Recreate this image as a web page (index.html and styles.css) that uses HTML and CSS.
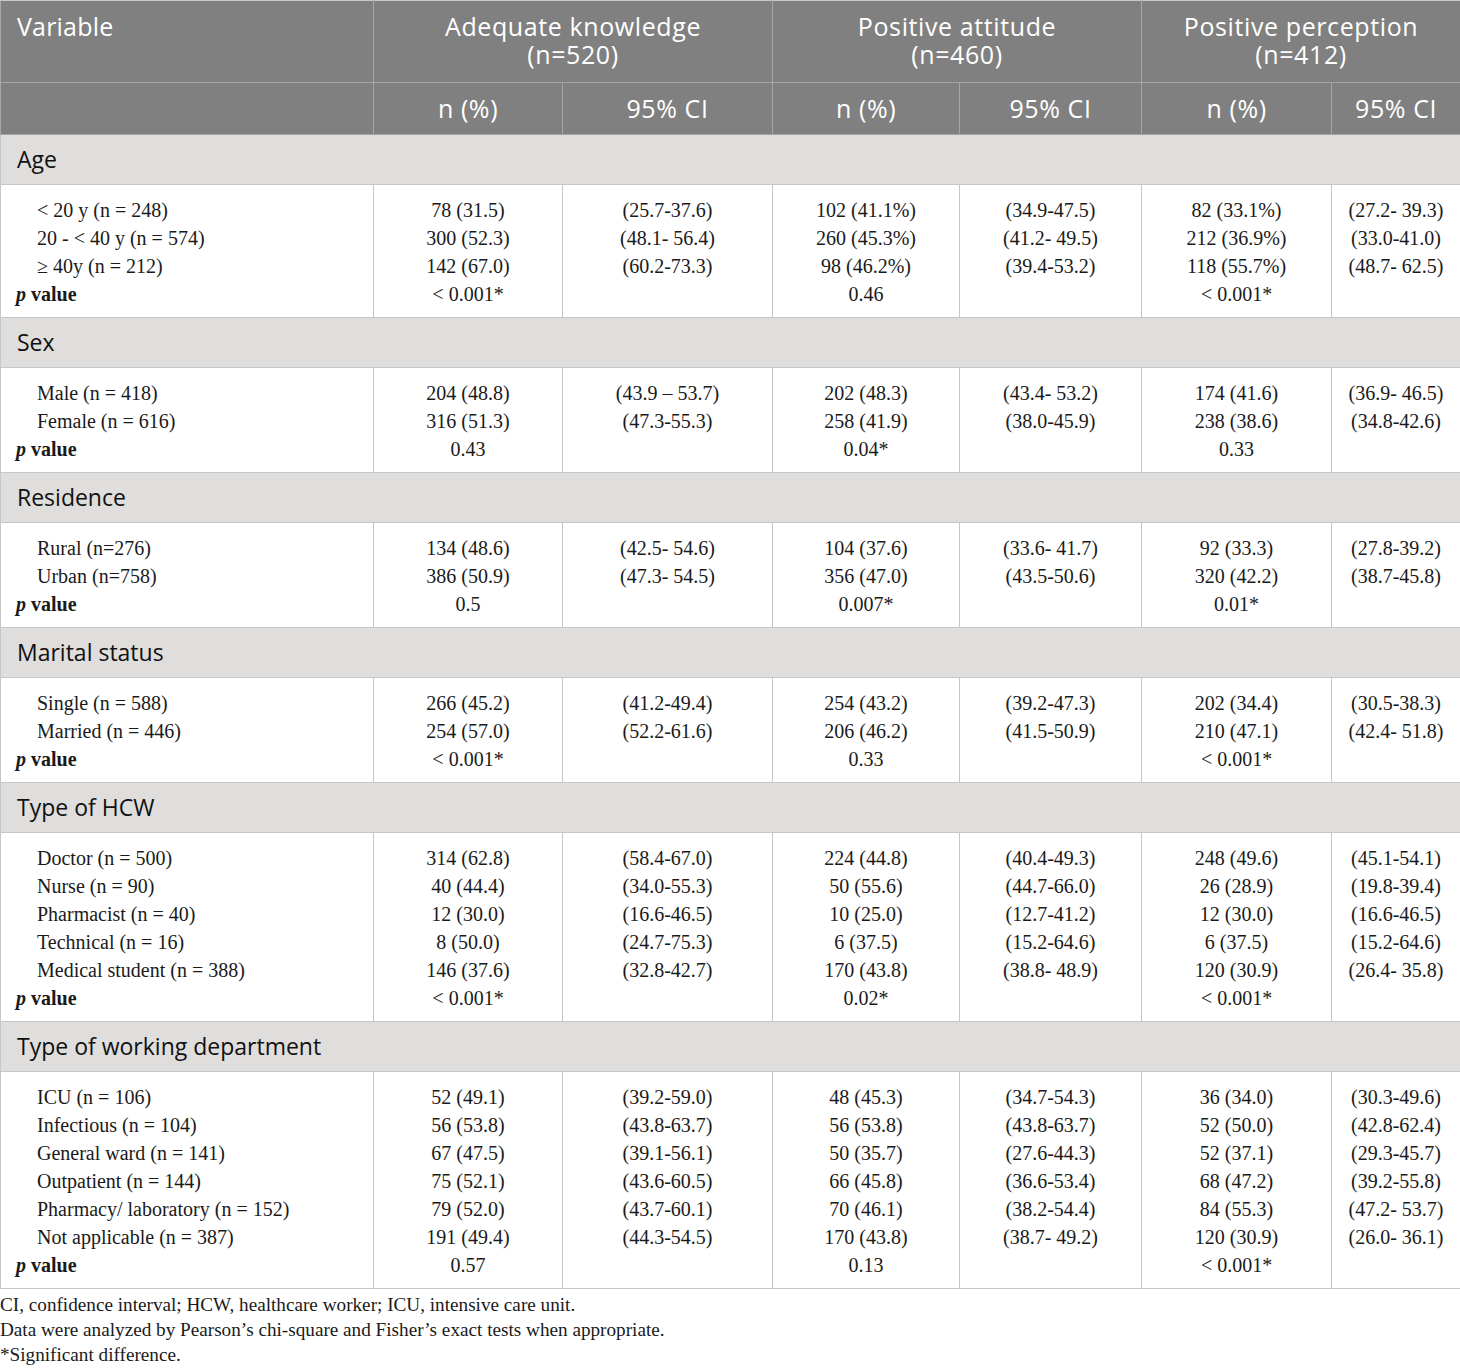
FILE: index.html
```html
<!DOCTYPE html>
<html>
<head>
<meta charset="utf-8">
<link rel="stylesheet" href="styles.css">
</head>
<body>
<table class="tbl">
  <colgroup>
    <col class="c0"><col class="c1"><col class="c2"><col class="c3"><col class="c4"><col class="c5"><col class="c6">
  </colgroup>
  <thead>
    <tr class="h1">
      <th class="var">Variable</th>
      <th colspan="2"><div>Adequate knowledge</div><div>(n=520)</div></th>
      <th colspan="2"><div>Positive attitude</div><div>(n=460)</div></th>
      <th colspan="2"><div>Positive perception</div><div>(n=412)</div></th>
    </tr>
    <tr class="h2">
      <th></th>
      <th>n (%)</th><th>95% CI</th>
      <th>n (%)</th><th>95% CI</th>
      <th>n (%)</th><th>95% CI</th>
    </tr>
  </thead>
  <tbody>
    <tr class="sec"><td colspan="7">Age</td></tr>
    <tr class="data">
      <td class="lab"><div class="ind">&lt; 20 y (n = 248)</div><div class="ind">20 - &lt; 40 y (n = 574)</div><div class="ind">≥ 40y (n = 212)</div><div class="pv"><i>p</i> value</div></td>
      <td><div>78 (31.5)</div><div>300 (52.3)</div><div>142 (67.0)</div><div>&lt; 0.001*</div></td>
      <td><div>(25.7-37.6)</div><div>(48.1- 56.4)</div><div>(60.2-73.3)</div></td>
      <td><div>102 (41.1%)</div><div>260 (45.3%)</div><div>98 (46.2%)</div><div>0.46</div></td>
      <td><div>(34.9-47.5)</div><div>(41.2- 49.5)</div><div>(39.4-53.2)</div></td>
      <td><div>82 (33.1%)</div><div>212 (36.9%)</div><div>118 (55.7%)</div><div>&lt; 0.001*</div></td>
      <td><div>(27.2- 39.3)</div><div>(33.0-41.0)</div><div>(48.7- 62.5)</div></td>
    </tr>
    <tr class="sec"><td colspan="7">Sex</td></tr>
    <tr class="data">
      <td class="lab"><div class="ind">Male (n = 418)</div><div class="ind">Female (n = 616)</div><div class="pv"><i>p</i> value</div></td>
      <td><div>204 (48.8)</div><div>316 (51.3)</div><div>0.43</div></td>
      <td><div>(43.9 – 53.7)</div><div>(47.3-55.3)</div></td>
      <td><div>202 (48.3)</div><div>258 (41.9)</div><div>0.04*</div></td>
      <td><div>(43.4- 53.2)</div><div>(38.0-45.9)</div></td>
      <td><div>174 (41.6)</div><div>238 (38.6)</div><div>0.33</div></td>
      <td><div>(36.9- 46.5)</div><div>(34.8-42.6)</div></td>
    </tr>
    <tr class="sec"><td colspan="7">Residence</td></tr>
    <tr class="data">
      <td class="lab"><div class="ind">Rural (n=276)</div><div class="ind">Urban (n=758)</div><div class="pv"><i>p</i> value</div></td>
      <td><div>134 (48.6)</div><div>386 (50.9)</div><div>0.5</div></td>
      <td><div>(42.5- 54.6)</div><div>(47.3- 54.5)</div></td>
      <td><div>104 (37.6)</div><div>356 (47.0)</div><div>0.007*</div></td>
      <td><div>(33.6- 41.7)</div><div>(43.5-50.6)</div></td>
      <td><div>92 (33.3)</div><div>320 (42.2)</div><div>0.01*</div></td>
      <td><div>(27.8-39.2)</div><div>(38.7-45.8)</div></td>
    </tr>
    <tr class="sec"><td colspan="7">Marital status</td></tr>
    <tr class="data">
      <td class="lab"><div class="ind">Single (n = 588)</div><div class="ind">Married (n = 446)</div><div class="pv"><i>p</i> value</div></td>
      <td><div>266 (45.2)</div><div>254 (57.0)</div><div>&lt; 0.001*</div></td>
      <td><div>(41.2-49.4)</div><div>(52.2-61.6)</div></td>
      <td><div>254 (43.2)</div><div>206 (46.2)</div><div>0.33</div></td>
      <td><div>(39.2-47.3)</div><div>(41.5-50.9)</div></td>
      <td><div>202 (34.4)</div><div>210 (47.1)</div><div>&lt; 0.001*</div></td>
      <td><div>(30.5-38.3)</div><div>(42.4- 51.8)</div></td>
    </tr>
    <tr class="sec"><td colspan="7">Type of HCW</td></tr>
    <tr class="data">
      <td class="lab"><div class="ind">Doctor (n = 500)</div><div class="ind">Nurse (n = 90)</div><div class="ind">Pharmacist (n = 40)</div><div class="ind">Technical (n = 16)</div><div class="ind">Medical student (n = 388)</div><div class="pv"><i>p</i> value</div></td>
      <td><div>314 (62.8)</div><div>40 (44.4)</div><div>12 (30.0)</div><div>8 (50.0)</div><div>146 (37.6)</div><div>&lt; 0.001*</div></td>
      <td><div>(58.4-67.0)</div><div>(34.0-55.3)</div><div>(16.6-46.5)</div><div>(24.7-75.3)</div><div>(32.8-42.7)</div></td>
      <td><div>224 (44.8)</div><div>50 (55.6)</div><div>10 (25.0)</div><div>6 (37.5)</div><div>170 (43.8)</div><div>0.02*</div></td>
      <td><div>(40.4-49.3)</div><div>(44.7-66.0)</div><div>(12.7-41.2)</div><div>(15.2-64.6)</div><div>(38.8- 48.9)</div></td>
      <td><div>248 (49.6)</div><div>26 (28.9)</div><div>12 (30.0)</div><div>6 (37.5)</div><div>120 (30.9)</div><div>&lt; 0.001*</div></td>
      <td><div>(45.1-54.1)</div><div>(19.8-39.4)</div><div>(16.6-46.5)</div><div>(15.2-64.6)</div><div>(26.4- 35.8)</div></td>
    </tr>
    <tr class="sec"><td colspan="7">Type of working department</td></tr>
    <tr class="data">
      <td class="lab"><div class="ind">ICU (n = 106)</div><div class="ind">Infectious (n = 104)</div><div class="ind">General ward (n = 141)</div><div class="ind">Outpatient (n = 144)</div><div class="ind">Pharmacy/ laboratory (n = 152)</div><div class="ind">Not applicable (n = 387)</div><div class="pv"><i>p</i> value</div></td>
      <td><div>52 (49.1)</div><div>56 (53.8)</div><div>67 (47.5)</div><div>75 (52.1)</div><div>79 (52.0)</div><div>191 (49.4)</div><div>0.57</div></td>
      <td><div>(39.2-59.0)</div><div>(43.8-63.7)</div><div>(39.1-56.1)</div><div>(43.6-60.5)</div><div>(43.7-60.1)</div><div>(44.3-54.5)</div></td>
      <td><div>48 (45.3)</div><div>56 (53.8)</div><div>50 (35.7)</div><div>66 (45.8)</div><div>70 (46.1)</div><div>170 (43.8)</div><div>0.13</div></td>
      <td><div>(34.7-54.3)</div><div>(43.8-63.7)</div><div>(27.6-44.3)</div><div>(36.6-53.4)</div><div>(38.2-54.4)</div><div>(38.7- 49.2)</div></td>
      <td><div>36 (34.0)</div><div>52 (50.0)</div><div>52 (37.1)</div><div>68 (47.2)</div><div>84 (55.3)</div><div>120 (30.9)</div><div>&lt; 0.001*</div></td>
      <td><div>(30.3-49.6)</div><div>(42.8-62.4)</div><div>(29.3-45.7)</div><div>(39.2-55.8)</div><div>(47.2- 53.7)</div><div>(26.0- 36.1)</div></td>
    </tr>
  </tbody>
</table>
<div class="notes">
  <p>CI, confidence interval; HCW, healthcare worker; ICU, intensive care unit.</p>
  <p>Data were analyzed by Pearson’s chi-square and Fisher’s exact tests when appropriate.</p>
  <p>*Significant difference.</p>
</div>
</body>
</html>
```

FILE: styles.css
```css
html, body {
  margin: 0;
  padding: 0;
  background: #ffffff;
}
body {
  width: 1460px;
  color: #1a1a1a;
  font-family: "Liberation Serif", "Times New Roman", serif;
}
.tbl {
  width: 1460px;
  border-collapse: collapse;
  table-layout: fixed;
}
.c0 { width: 373px; }
.c1 { width: 189px; }
.c2 { width: 210px; }
.c3 { width: 187px; }
.c4 { width: 182px; }
.c5 { width: 190px; }
.c6 { width: 129px; }

.tbl th {
  background: #808080;
  color: #ffffff;
  font-family: "Open Sans", Lato, sans-serif;
  font-weight: 400;
  font-size: 25px;
  letter-spacing: 0.6px;
  line-height: 28px;
  text-align: center;
  border: 1px solid #a6a6a6;
  padding: 0;
}
.tbl .h1 th div { height: 28px; }
.tbl thead tr:first-child th { border-top-color: #c8c8c8; }
.tbl .h1 th {
  height: 70px;
  vertical-align: top;
  padding-top: 11px;
}
.tbl .h1 th.var {
  text-align: left;
  padding-left: 16px;
  letter-spacing: 0.2px;
}
.tbl .h2 th {
  height: 49px;
  padding-bottom: 2px;
  vertical-align: middle;
}
.sec td {
  background: #dfdedc;
  color: #111111;
  font-family: "Open Sans", Lato, sans-serif;
  font-size: 23px;
  line-height: 28px;
  height: 47px;
  padding: 0 0 2px 16px;
  border: 1px solid #c6c6c6;
  vertical-align: middle;
}
.data td {
  border: 1px solid #c6c6c6;
  vertical-align: top;
  text-align: center;
  font-size: 20px;
  line-height: 28px;
  padding: 11px 0 9px 0;
}
.data td.lab {
  text-align: left;
  padding-left: 15px;
}
.ind { padding-left: 21px; }
.pv { font-weight: 700; }
.notes {
  padding-top: 3px;
  font-size: 19.2px;
  line-height: 25px;
  color: #1a1a1a;
}
.notes p { margin: 0; }
```
